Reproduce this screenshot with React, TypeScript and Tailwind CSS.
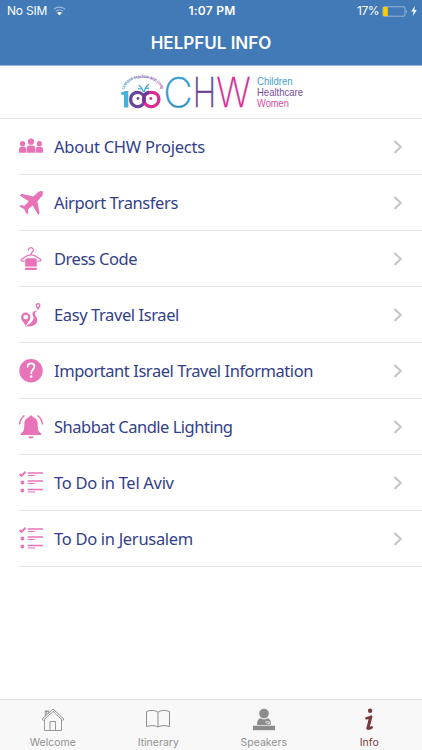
import type { ReactNode } from 'react'

interface InfoRow {
  label: string
  tracking: string
  icon: ReactNode
}

function PeopleIcon() {
  return (
    <svg viewBox="0 0 24 24" className="size-6" fill="currentColor">
      <circle cx="3.6" cy="8.700" r="2.600" />
      <circle cx="12" cy="6.700" r="3.100" />
      <circle cx="20.4" cy="8.700" r="2.600" />
      <path d="M0 17.700v-3.400q0-2.600 2.500-2.600h2.300q2.200 0 2.200 2.400v3.600z" />
      <path d="M7.600 17.700v-4.200q0-3 3-3h2.800q3 0 3 3v4.200z" />
      <path d="M17 17.700v-3.600q0-2.400 2.200-2.400h2.300q2.500 0 2.500 2.600v3.400z" />
    </svg>
  )
}

function PlaneIcon() {
  return (
    <svg viewBox="0 0 24 24" className="size-6" fill="currentColor">
      <path d="M23.6.3c-1.700-.7-3.900 0-5.500 1.600l-3.700 3.600L2.600 2.700.8 4.500l8.900 5.800-4.300 4.600-3.600-.9L.2 15.300l5 3 2.700 5.200 1.500-1.400-.6-3.600 4.900-4 5.400 9.300 1.500-1.600-2.300-12 3.900-4.200c1.600-1.600 2.200-4.200 1.400-5.700z" />
    </svg>
  )
}

function HangerIcon() {
  return (
    <svg viewBox="0 0 24 24" className="size-6" fill="none" stroke="currentColor" strokeWidth="1.3" strokeLinecap="round" strokeLinejoin="round">
      <path d="M9.500 3.100a2.400 2.400 0 1 1 3.700 2c-.9.600-1.200 1.200-1.200 2.600" />
      <path d="M5.200 14.200H3.400c-1.500 0-1.700-1.400-.6-2.200C5.500 10 8.500 7.800 12 7.800s6.500 2.200 9.200 4.200c1.100.8.900 2.200-.6 2.200h-1.800" />
      <path d="M8.500 11.300h7q2.300 0 2.300 2.300v5.900H6.200v-5.900q0-2.300 2.300-2.300z" fill="currentColor" stroke="none" />
      <path d="M6.200 20.700h11.600V23H6.200z" fill="currentColor" stroke="none" />
    </svg>
  )
}

function RouteIcon() {
  return (
    <svg viewBox="0 0 24 24" className="size-6">
      <path
        fill="currentColor"
        fillRule="evenodd"
        d="M6.700 9.500a4.700 4.700 0 0 1 4.700 4.700c0 3-3.300 5.500-4.700 9-1.400-3.500-4.700-6-4.700-9a4.700 4.700 0 0 1 4.700-4.700zm0 2.300a2.300 2.300 0 1 0 0 4.600 2.300 2.300 0 0 0 0-4.600z"
      />
      <path
        fill="currentColor"
        fillRule="evenodd"
        d="M19 .1a2.500 2.500 0 0 1 2.500 2.500c0 1.700-1.800 2.700-2.500 4.900-.7-2.200-2.500-3.200-2.500-4.900A2.500 2.500 0 0 1 19 .1zm0 1.300a1.200 1.200 0 1 0 0 2.400 1.200 1.200 0 0 0 0-2.400z"
      />
      <path
        fill="currentColor"
        d="M18.500 7.700c-3.600-.3-5.800 1.700-4.800 4.200.7 1.800 1.300 2.900.4 4.900-1 2.200-3.300 4.100-7.400 6.600 6.200.5 10.600-1.500 11.500-5.200.7-3-1.700-4.600-2.200-6.600-.4-1.700.2-3.100 2.500-3.900z"
      />
    </svg>
  )
}

function QuestionIcon() {
  return (
    <svg viewBox="0 0 24 24" className="size-6" fill="none">
      <circle cx="12" cy="11.700" r="11.700" fill="currentColor" />
      <path d="M8.600 7.800C8.600 5.700 10 4.400 12 4.400s3.400 1.300 3.400 3.200c0 2.900-3.200 3.200-3.200 6.700" stroke="white" strokeWidth="1.800" strokeLinecap="round" />
      <circle cx="12.200" cy="17.500" r="1.300" fill="white" />
    </svg>
  )
}

function BellIcon() {
  return (
    <svg viewBox="0 0 24 24" className="size-6" fill="none">
      <path
        d="M12 .4c1 0 1.700.7 1.700 1.600 3 .8 5 3.200 5 6.800 0 5.500.5 8.300 3.500 9.700V20H1.800v-1.500c3-1.400 3.500-4.200 3.500-9.700 0-3.600 2-6 5-6.800 0-.9.700-1.600 1.700-1.600zM9.300 21.600h5.400c-.3 1.200-1.300 2-2.700 2s-2.400-.8-2.700-2z"
        fill="currentColor"
      />
      <path d="M5 .9C2.500 2.900 1 5.400.6 9M19 .9c2.500 2 4 4.500 4.400 8.100" stroke="currentColor" strokeWidth="1.500" strokeLinecap="round" />
    </svg>
  )
}

function ChecklistIcon() {
  return (
    <svg viewBox="0 0 24 24" className="size-6" fill="none" stroke="currentColor">
      <path d="m.6 2.900 2 2L6.500.7" strokeWidth="2" />
      <circle cx="3.400" cy="11.500" r="1.900" fill="currentColor" stroke="none" />
      <circle cx="3.400" cy="19.500" r="1.900" fill="currentColor" stroke="none" />
      <path d="M8.700 2H24M8.700 10H24M8.700 18.500H24" strokeWidth="1.700" />
      <path d="M8.700 4.500h7.500M8.700 12.500h7.500M8.700 21h7.500" strokeWidth="1" />
    </svg>
  )
}

const rows: InfoRow[] = [
  { label: 'About CHW Projects', tracking: 'tracking-[-0.240px]', icon: <PeopleIcon /> },
  { label: 'Airport Transfers', tracking: 'tracking-[-0.400px]', icon: <PlaneIcon /> },
  { label: 'Dress Code', tracking: 'tracking-[-0.480px]', icon: <HangerIcon /> },
  { label: 'Easy Travel Israel', tracking: 'tracking-[-0.400px]', icon: <RouteIcon /> },
  { label: 'Important Israel Travel Information', tracking: 'tracking-[-0.440px]', icon: <QuestionIcon /> },
  { label: 'Shabbat Candle Lighting', tracking: 'tracking-[-0.500px]', icon: <BellIcon /> },
  { label: 'To Do in Tel Aviv', tracking: 'tracking-[-0.300px]', icon: <ChecklistIcon /> },
  { label: 'To Do in Jerusalem', tracking: 'tracking-[-0.300px]', icon: <ChecklistIcon /> },
]

function Logo() {
  return (
    <svg width="190" height="52" viewBox="0 -8 190 52" fill="none">
      <defs>
        <linearGradient id="arc" x1="0" x2="1">
          <stop stopColor="#2d9fd0" />
          <stop offset=".45" stopColor="#514694" />
          <stop offset="1" stopColor="#a13c9a" />
        </linearGradient>
        <linearGradient id="cGradient" x1="0" x2="0" y1="0" y2="1">
          <stop stopColor="#35a5d6" />
          <stop offset="1" stopColor="#308bc2" />
        </linearGradient>
        <linearGradient id="hGradient" x1="0" x2="0" y1="0" y2="1">
          <stop stopColor="#544a9b" />
          <stop offset="1" stopColor="#82348b" />
        </linearGradient>
        <path id="arcText" d="M4.500 15.500A18 11.500 0 0 1 40.500 15.500" />
      </defs>
      <text fontFamily="Liberation Sans" fontSize="3.800" fontWeight="700" fill="url(#arc)">
        <textPath href="#arcText" textLength="46" lengthAdjust="spacingAndGlyphs">CANADIAN HADASSAH-WIZO (CHW)</textPath>
      </text>
      {/* centenary mark: a one and two rings forming a butterfly */}
      <path d="M1.200 18.500 5 17h3.300v16.500H4V20.800H1.200z" fill="#42b2da" />
      <path d="M24 22.500c-1.800-4-6.300-4.800-9.500-3.500-4.700 2-5 9-1.300 12 2.800 2.300 7.200 1.900 9.400-.3 1.900-1.900 2.300-4.800 1.400-8.200z" stroke="#67469b" strokeWidth="3.200" strokeLinejoin="round" />
      <path d="M24 22.500c1.800-4 7.200-4.900 11-3.500 5 2 5 9 1 12-2.900 2.300-7.500 1.900-9.900-.3-2.100-1.900-2.900-4.800-2.100-8.200z" stroke="#dc2993" strokeWidth="3.200" strokeLinejoin="round" />
      <path d="M24.300 29c-.8-2.300-.9-4.500-.2-6.700.6-2 2.500-3.700 4.900-4" stroke="#6b3996" strokeWidth="3" />
      <circle cx="18" cy="24.500" r="1.400" fill="#74479b" />
      <circle cx="30.800" cy="24.500" r="1.400" fill="#dc2993" />
      <path d="M23.200 17.500c-.8-2.500-2.200-5-4.200-6M24.300 17.500c.5-3 2-5.300 4.300-7M22 14.500l-3.500.3M25.500 14.500l3-.3" stroke="#38a8d5" strokeWidth="1.200" strokeLinecap="round" />
      <g fontFamily="Inter" fontSize="41" fontWeight="200">
        <text x="43.300" y="33" textLength="29.500" lengthAdjust="spacingAndGlyphs" fill="url(#cGradient)" stroke="#3b9dce" strokeWidth=".3">C</text>
        <text x="72.800" y="33" textLength="23.500" lengthAdjust="spacingAndGlyphs" fill="url(#hGradient)" stroke="#704294" strokeWidth=".3">H</text>
        <text x="96.300" y="33" textLength="34.500" lengthAdjust="spacingAndGlyphs" fill="#d92b93" stroke="#d92b93" strokeWidth=".3">W</text>
      </g>
      <g fontFamily="Liberation Sans" fontSize="10.300">
        <text x="137" y="10.800" textLength="35.500" lengthAdjust="spacingAndGlyphs" fill="#419fce">Children</text>
        <text x="137" y="22" textLength="46" lengthAdjust="spacingAndGlyphs" fill="#76509b">Healthcare</text>
        <text x="137" y="33" textLength="32" lengthAdjust="spacingAndGlyphs" fill="#d84ba0">Women</text>
      </g>
    </svg>
  )
}

function StatusBar() {
  return (
    <div className="flex h-[22px] items-center text-[12px] leading-none">
      <div className="flex flex-1 items-center gap-[6px] pl-[7px]">
        <span className="tracking-[-0.200px]">No SIM</span>
        <svg width="13" height="10" viewBox="0 0 13 10" fill="none">
          <path d="M.8 3.300a8.500 8.500 0 0 1 11.400 0M2.700 5.400a5.700 5.700 0 0 1 7.600 0" stroke="white" strokeOpacity=".45" strokeWidth="1.200" />
          <path d="M4 6.800q2.500-1.800 5 0L6.500 9.500z" fill="white" />
        </svg>
      </div>
      <span className="font-semibold tracking-[0.250px]">1:07 PM</span>
      <div className="flex flex-1 items-center justify-end gap-[3px] pr-[5px]">
        <span className="tracking-[-0.500px]">17%</span>
        <svg width="26" height="11" viewBox="0 0 26 11">
          <rect x="1" y=".8" width="22" height="9.400" rx="1.200" fill="none" stroke="white" strokeOpacity=".5" strokeWidth=".9" />
          <rect x="1.200" y="1" width="4.600" height="9" rx=".6" fill="#fc0" />
          <path d="M24 4q1.800 1.500 0 3z" fill="white" fillOpacity=".7" />
        </svg>
        <svg width="6" height="10" viewBox="0 0 5 9" fill="white">
          <path d="M3.300 0 0 5h2.100L1.500 9 5 3.700H2.800z" />
        </svg>
      </div>
    </div>
  )
}

function HomeIcon() {
  return (
    <svg width="24" height="24" viewBox="0 0 24 24" fill="none" stroke="#8c8c8c" strokeWidth=".9">
      <path d="M3.500 11.500v11h17v-11M9 22.500v-9h5.500v9" />
      <path d="M12 1 1 11.200l1.300 1.100L12 3.500l9.700 8.800 1.300-1.100zM4.300 8V3.200h3.400v1.600M3.800 3.200h4.400M5.700 3.500v3" />
    </svg>
  )
}

function BookIcon() {
  return (
    <svg width="24" height="24" viewBox="0 0 24 24" fill="none" stroke="#8c8c8c" strokeWidth="1">
      <path d="M12 4.300C9.500 2 4 2 .5 3.500v15c4-1.300 9-1.200 11.500.5 2.500-1.700 7.500-1.800 11.500-.5v-15C20 2 14.500 2 12 4.300zM12 4.300V19" />
    </svg>
  )
}

function SpeakerIcon() {
  return (
    <svg width="24" height="24" viewBox="0 0 24 24" fill="#8c8c8c">
      <circle cx="12" cy="5.500" r="4.800" />
      <path d="M5.200 17c-.4-4 .9-6.300 3.300-6.700q3.500 2.200 7 0c3 .8 3.700 3.200 3.300 6.700z" />
      <path d="M1 17.700h22v4.500H1z" />
      <path d="M13.500 14.100c1.400-1.200 3.900-.6 4.500.3-.9 1.200-3.200 1.400-4.500-.3zm2.200 1.600h2.600" fill="none" stroke="#f8f8f8" strokeWidth=".7" />
    </svg>
  )
}

function InfoIcon() {
  return (
    <svg width="24" height="24" viewBox="0 0 24 24" fill="none">
      <circle cx="13.100" cy="2.700" r="2.200" fill="#783a3d" />
      <path d="M9.400 10.200q2.600-.2 4.700-1.500l-2.900 11.200q.2 1.600 3.500-.5M10.600 20.500l2.600-10.500" stroke="#783a3d" strokeWidth="2.600" strokeLinecap="round" strokeLinejoin="round" />
    </svg>
  )
}

const tabs = [
  { label: 'Welcome', icon: <HomeIcon />, color: 'text-[#929292]' },
  { label: 'Itinerary', icon: <BookIcon />, color: 'text-[#929292]' },
  { label: 'Speakers', icon: <SpeakerIcon />, color: 'text-[#929292]' },
  { label: 'Info', icon: <InfoIcon />, color: 'text-[#783a3d]' },
]

export default function App() {
  return (
    <div className="flex h-[750px] w-[422px] flex-col overflow-hidden bg-white font-['Inter',sans-serif]">
      <header className="h-[65px] shrink-0 bg-[#4279b7] text-white">
        <StatusBar />
        <h1 className="flex h-[43px] items-center justify-center text-[17px] font-semibold">HELPFUL INFO</h1>
      </header>

      <div className="flex h-[54px] shrink-0 justify-center border-y border-t-[#9dbbd9] border-b-[#e5e5e5] pl-[8px]">
        <Logo />
      </div>

      <main className="flex-1">
        {rows.map(row => (
          <div key={row.label} className="ml-[19px] flex h-14 items-center border-b border-[#e8e8e8] pr-[19px]">
            <div className="w-[35px] shrink-0 text-[#e873b9]">{row.icon}</div>
            <span className={`flex-1 pt-px font-['Noto_Sans',sans-serif] text-[16.500px] whitespace-nowrap text-[#32408b] ${row.tracking}`}>{row.label}</span>
            <svg width="10" height="14" viewBox="0 0 10 14" fill="none" stroke="#c4c4c8" strokeWidth="1.900">
              <path d="m1.500 1 6.300 6-6.300 6" />
            </svg>
          </div>
        ))}
      </main>

      <nav className="grid h-[51px] shrink-0 grid-cols-4 border-t border-[#dadada] bg-[#f8f8f8]">
        {tabs.map(tab => (
          <div key={tab.label} className={`flex flex-col items-center pt-[8px] ${tab.color}`}>
            {tab.icon}
            <span className="mt-[4px] text-[10.500px] leading-[14px]">{tab.label}</span>
          </div>
        ))}
      </nav>
    </div>
  )
}
